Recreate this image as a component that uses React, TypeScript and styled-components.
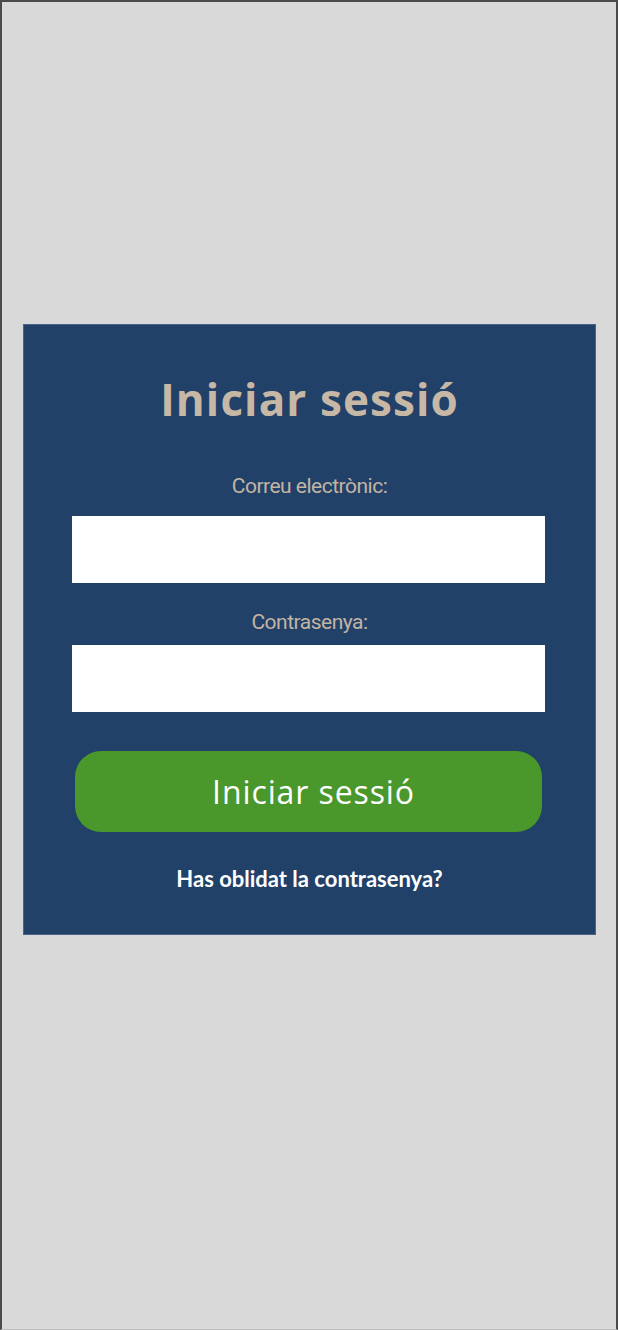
import React from "react";
import styled, { createGlobalStyle } from "styled-components";

const GlobalStyle = createGlobalStyle`
  html, body {
    margin: 0;
    padding: 0;
    background: #d9d9d9;
  }
  * {
    box-sizing: border-box;
  }
`;

const Frame = styled.div`
  width: 618px;
  height: 1330px;
  background: #d9d9d9;
  border-left: 2px solid #4a4a4a;
  border-right: 2px solid #4a4a4a;
  border-top: 2px solid #4a4a4a;
  border-bottom: 1px solid #bdbdbd;
  padding-top: 322px;
  padding-left: 21px;
`;

const Card = styled.form`
  width: 573px;
  height: 611px;
  background: #214169;
  border: 1px solid #4a6487;
  display: flex;
  flex-direction: column;
  align-items: center;
  padding-top: 46px;
`;

const Title = styled.h1`
  margin: 0;
  font-family: "Open Sans", "Liberation Sans", sans-serif;
  font-weight: 700;
  font-size: 44px;
  line-height: 56px;
  letter-spacing: 1.1px;
  color: #c7b8a6;
`;

const Label = styled.label<{ $top: number }>`
  margin-top: ${(p) => p.$top}px;
  font-family: "Roboto", "Liberation Sans", sans-serif;
  font-weight: 400;
  font-size: 21px;
  line-height: 24px;
  letter-spacing: -0.5px;
  color: #c3b5a3;
`;

const Input = styled.input<{ $top: number }>`
  margin-top: ${(p) => p.$top}px;
  width: 473px;
  height: 67px;
  border: none;
  background: #ffffff;
  outline: none;
  margin-right: 2px;
`;

const Button = styled.button`
  margin-top: 39px;
  width: 467px;
  height: 81px;
  border: none;
  border-radius: 26px;
  background: #4a982b;
  color: #ffffff;
  font-family: "Open Sans", "Liberation Sans", sans-serif;
  font-weight: 500;
  font-size: 32px;
  letter-spacing: 0.9px;
  padding: 0 0 0 10px;
  margin-right: 2px;
  cursor: pointer;
`;

const Forgot = styled.a`
  margin-top: 35px;
  font-family: Lato, "Liberation Sans", sans-serif;
  font-weight: 700;
  font-size: 22px;
  line-height: 24px;
  color: #ffffff;
  text-decoration: none;
`;

export default function App() {
  return (
    <>
      <GlobalStyle />
      <Frame>
        <Card onSubmit={(e) => e.preventDefault()}>
          <Title>Iniciar sessió</Title>
          <Label $top={47}>Correu electrònic:</Label>
          <Input type="email" $top={18} />
          <Label $top={27}>Contrasenya:</Label>
          <Input type="password" $top={11} />
          <Button type="submit">Iniciar sessió</Button>
          <Forgot href="#">Has oblidat la contrasenya?</Forgot>
        </Card>
      </Frame>
    </>
  );
}
